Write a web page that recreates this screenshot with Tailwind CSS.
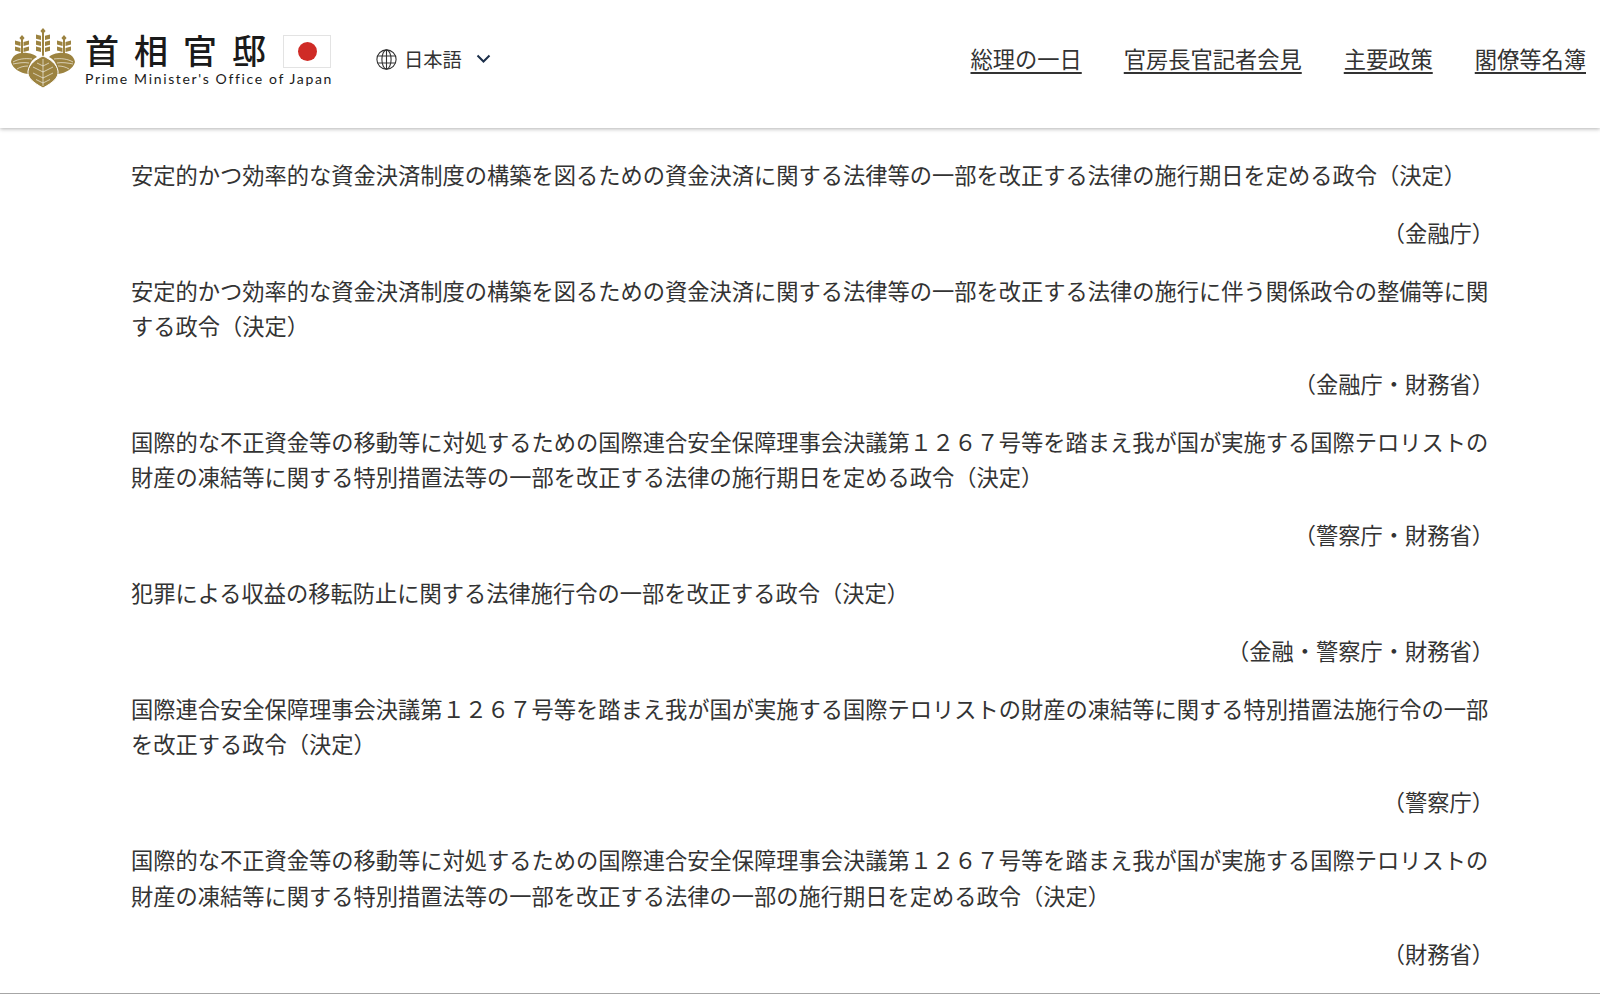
<!DOCTYPE html>
<html lang="ja">
<head>
  <meta charset="UTF-8">
  <title>首相官邸</title>
  <script src="https://cdn.jsdelivr.net/npm/@tailwindcss/browser@4"></script>
</head>
<body class="bg-white h-[994px] overflow-hidden font-['Noto_Sans_CJK_JP',sans-serif] text-[#333]">
  <header class="h-[128px] bg-white shadow-[0_1px_4px_rgba(0,0,0,0.3)] flex items-start justify-between relative">
    <div class="flex items-start">
      <svg class="ml-[10px] mt-[28px] w-[66px] h-[61px] shrink-0" viewBox="0 0 66 61">
        <g fill="#9c8340">
          <path d="M33 0l2.600 3-2.600 3-2.600-3z"/>
          <path d="M26 6.500l5 1.200v4.300l-5-1.200zM40 6.500l-5 1.200v4.300l5-1.200zM26 12.500l5 1.200v4.300l-5-1.200zM40 12.500l-5 1.200v4.300l5-1.200zM26 18.500l5 1.200v4.300l-5-1.200zM40 18.500l-5 1.200v4.300l5-1.200z"/>
          <path d="M32 4h2v24h-2z"/>
          <path d="M12 7l2.600 3-2.600 3-2.600-3zM54 7l2.600 3-2.600 3-2.600-3z"/>
          <path d="M5 12.500l5.500 1.500v4l-5.500-1.500zM19 12.500l-5.500 1.500v4l5.500-1.500zM5 18.500l5.500 1.500v4l-5.500-1.500zM19 18.500l-5.500 1.500v4l5.500-1.500zM47 12.500l5.500 1.500v4l-5.500-1.500zM61 12.500l-5.500 1.500v4l5.500-1.500zM47 18.500l5.500 1.500v4l-5.500-1.500zM61 18.500l-5.500 1.500v4l5.500-1.500z"/>
          <path d="M11 11h2v15h-2zM53 11h2v15h-2z"/>
          <path d="M1 34C2 27 9 24 17 25c5 .5 8 2 10 4-6 3-9 9-9 17C10 45 3 41 1 34z"/>
          <path d="M65 34c-1-7-8-10-16-9-5 .5-8 2-10 4 6 3 9 9 9 17 8-1 15-5 17-12z"/>
          <path d="M33 28c7 3 14 8 15 15 1 7-6 12-15 17-9-5-16-10-15-17 1-7 8-12 15-15z" stroke="#fff" stroke-width="1"/>
        </g>
        <g fill="none" stroke="#fff" stroke-width="0.6">
          <path d="M33 31v27M33 38l-6-3M33 38l6-3M33 44l-10-5M33 44l10-5M33 50l-10-5M33 50l10-5M33 55l-7-3.500M33 55l7-3.500"/>
          <path d="M3 34c5-3 12-4 19-3M3 36c5-1 11-2 16-1M7 41c3-2 7-3 11-3M63 34c-5-3-12-4-19-3M63 36c-5-1-11-2-16-1M59 41c-3-2-7-3-11-3"/>
        </g>
      </svg>
      <div class="ml-[9px] mt-[30px] w-[246px]">
        <div class="flex items-start justify-between h-[40px]">
          <div class="text-[34px] leading-[40px] tracking-[15px] font-medium text-[#1a1a1a] whitespace-nowrap">首相官邸</div>
          <div class="w-[48px] h-[33px] mt-[5px] border border-[#e3e3e3] bg-white flex items-center justify-center shrink-0">
            <span class="w-[19px] h-[19px] rounded-full bg-[#cf2b26]"></span>
          </div>
        </div>
        <div class="font-['Lato',sans-serif] text-[14px] leading-[18px] tracking-[1.65px] text-[#1a1a1a] whitespace-nowrap">Prime Minister's Office of Japan</div>
      </div>
      <div class="flex items-center ml-[45px] mt-[46px] h-[26px]">
        <svg class="w-[21px] h-[21px]" viewBox="0 0 21 21" fill="none" stroke="#333" stroke-width="1.1">
          <circle cx="10.5" cy="10.5" r="9.6"/>
          <ellipse cx="10.5" cy="10.5" rx="4.6" ry="9.6"/>
          <path d="M10.5 1v19M1.6 7h17.8M1.6 14h17.8"/>
        </svg>
        <span class="ml-[7px] text-[19.3px] leading-[26px]">日本語</span>
        <svg class="ml-[14px] w-[15px] h-[10px]" viewBox="0 0 15 10" fill="none" stroke="#1c2f4a" stroke-width="2">
          <path d="M1.5 1.5l6 6 6-6"/>
        </svg>
      </div>
    </div>
    <nav class="flex gap-[42px] mt-[41px] pr-[14px] text-[22.26px] leading-[34px]">
      <a href="#" class="underline underline-offset-4">総理の一日</a>
      <a href="#" class="underline underline-offset-4">官房長官記者会見</a>
      <a href="#" class="underline underline-offset-4">主要政策</a>
      <a href="#" class="underline underline-offset-4">閣僚等名簿</a>
    </nav>
  </header>
  <main class="pt-[28.75px] pl-[131px] w-[1489px] text-[22.26px] leading-[35.5px] flex flex-col gap-[22.4px]">
    <p>安定的かつ効率的な資金決済制度の構築を図るための資金決済に関する法律等の一部を改正する法律の施行期日を定める政令（決定）</p>
    <p class="text-right -mr-[5px]">（金融庁）</p>
    <p>安定的かつ効率的な資金決済制度の構築を図るための資金決済に関する法律等の一部を改正する法律の施行に伴う関係政令の整備等に関する政令（決定）</p>
    <p class="text-right -mr-[5px]">（金融庁・財務省）</p>
    <p>国際的な不正資金等の移動等に対処するための国際連合安全保障理事会決議第１２６７号等を踏まえ我が国が実施する国際テロリストの財産の凍結等に関する特別措置法等の一部を改正する法律の施行期日を定める政令（決定）</p>
    <p class="text-right -mr-[5px]">（警察庁・財務省）</p>
    <p>犯罪による収益の移転防止に関する法律施行令の一部を改正する政令（決定）</p>
    <p class="text-right -mr-[5px]">（金融・警察庁・財務省）</p>
    <p>国際連合安全保障理事会決議第１２６７号等を踏まえ我が国が実施する国際テロリストの財産の凍結等に関する特別措置法施行令の一部を改正する政令（決定）</p>
    <p class="text-right -mr-[5px]">（警察庁）</p>
    <p>国際的な不正資金等の移動等に対処するための国際連合安全保障理事会決議第１２６７号等を踏まえ我が国が実施する国際テロリストの財産の凍結等に関する特別措置法等の一部を改正する法律の一部の施行期日を定める政令（決定）</p>
    <p class="text-right -mr-[5px]">（財務省）</p>
  </main>
  <div class="absolute left-0 top-[993px] w-full h-px bg-[#a6a6a6]"></div>
</body>
</html>
